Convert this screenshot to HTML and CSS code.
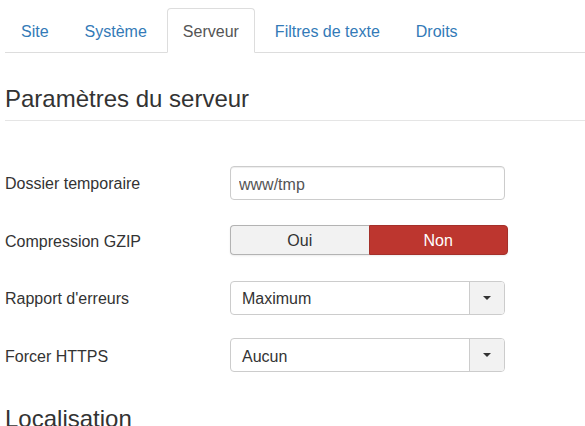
FILE: index.html
```html
<!DOCTYPE html>
<html lang="fr">
<head>
<meta charset="utf-8">
<title>Paramètres du serveur</title>
<link rel="stylesheet" href="styles.css">
</head>
<body>
<div class="page">
  <ul class="tabs">
    <li class="tab"><a href="#">Site</a></li>
    <li class="tab"><a href="#">Système</a></li>
    <li class="tab active"><a href="#">Serveur</a></li>
    <li class="tab"><a href="#">Filtres de texte</a></li>
    <li class="tab"><a href="#">Droits</a></li>
  </ul>

  <h3 class="section-title">Paramètres du serveur</h3>

  <div class="form">
    <div class="row">
      <label class="label">Dossier temporaire</label>
      <div class="control"><input class="text-input" type="text" value="www/tmp"></div>
    </div>
    <div class="row">
      <label class="label">Compression GZIP</label>
      <div class="control">
        <div class="toggle">
          <span class="toggle-btn">Oui</span>
          <span class="toggle-btn on-no">Non</span>
        </div>
      </div>
    </div>
    <div class="row">
      <label class="label">Rapport d'erreurs</label>
      <div class="control">
        <div class="select">
          <span class="select-value">Maximum</span>
          <span class="select-btn"><span class="caret"></span></span>
        </div>
      </div>
    </div>
    <div class="row">
      <label class="label">Forcer HTTPS</label>
      <div class="control">
        <div class="select">
          <span class="select-value">Aucun</span>
          <span class="select-btn"><span class="caret"></span></span>
        </div>
      </div>
    </div>
  </div>

  <h3 class="section-title next">Localisation</h3>
</div>
</body>
</html>
```
FILE: styles.css
```css
* { box-sizing: border-box; }
html, body {
  margin: 0;
  padding: 0;
  background: #fff;
}
body {
  font-family: "Liberation Sans", Arial, sans-serif;
  font-size: 16px;
  line-height: 1.42857;
  color: #333;
  overflow: hidden;
}
.page {
  padding: 8px 0 0 5px;
}
.tabs {
  list-style: none;
  margin: 0;
  padding: 0;
  display: flex;
  border-bottom: 1px solid #ddd;
}
.tab {
  margin-right: 4px;
  margin-bottom: -1px;
}
.tab a {
  display: block;
  padding: 12px 15px 8px;
  border: 1px solid transparent;
  border-radius: 4px 4px 0 0;
  color: #337ab7;
  text-decoration: none;
  line-height: 1.42857;
}
.tab.active a {
  color: #555;
  background: #fff;
  border-color: #ddd #ddd transparent #ddd;
}
.section-title {
  margin: 33.5px 0 0 0;
  padding: 0 0 7px 0;
  font-size: 24px;
  font-weight: 400;
  line-height: 1.1;
  color: #333;
  border-bottom: 1px solid #e5e5e5;
}
.section-title.next {
  border-bottom: none;
  margin-top: 34px;
}
.form {
  margin-top: 45px;
  display: flex;
  flex-direction: column;
  gap: 23.5px;
}
.row {
  display: flex;
  align-items: center;
  height: 34px;
}
.label {
  width: 225px;
  flex: none;
  color: #333;
  padding-top: 4px;
}
.control {
  flex: none;
}
.text-input {
  display: block;
  width: 275px;
  height: 34px;
  padding: 8px 8px 4px;
  font-family: "Liberation Sans", Arial, sans-serif;
  font-size: 16px;
  color: #555;
  background: #fff;
  border: 1px solid #ccc;
  border-radius: 4px;
  box-shadow: inset 0 1px 1px rgba(0,0,0,0.075);
  outline: none;
}
.toggle {
  display: flex;
  width: 278px;
  height: 30px;
  border-radius: 4px;
  box-shadow: 0 1px 2px rgba(0,0,0,0.08);
}
.toggle-btn {
  flex: 1;
  display: flex;
  align-items: center;
  justify-content: center;
  padding-top: 3px;
  background: #f2f2f2;
  color: #333;
  border: 1px solid #b3b3b3;
  border-right: none;
  border-radius: 4px 0 0 4px;
}
.toggle-btn.on-no {
  background: #bd362f;
  color: #fff;
  border: 1px solid #a4302a;
  border-radius: 0 4px 4px 0;
}
.select {
  display: flex;
  width: 275px;
  height: 34px;
  border: 1px solid #ccc;
  border-radius: 4px;
  background: #fff;
  overflow: hidden;
}
.select-value {
  flex: 1;
  display: flex;
  align-items: center;
  padding: 4px 0 0 11px;
  color: #333;
}
.select-btn {
  width: 35px;
  flex: none;
  display: flex;
  align-items: center;
  justify-content: center;
  background: #f2f2f2;
  border-left: 1px solid #ccc;
}
.caret {
  width: 0;
  height: 0;
  border-left: 4px solid transparent;
  border-right: 4px solid transparent;
  border-top: 4px solid #333;
}
```
